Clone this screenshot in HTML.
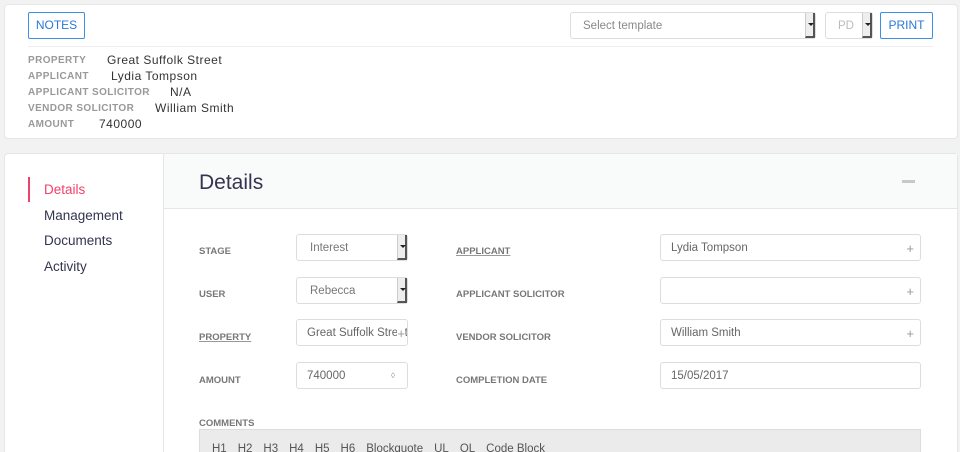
<!DOCTYPE html><html><head><style>
*{box-sizing:border-box;margin:0;padding:0}
html,body{width:960px;height:452px;overflow:hidden}
body{background:#f2f2f2;font-family:"Liberation Sans",sans-serif;position:relative}
.card{position:absolute;background:#fff;border:1px solid #e6e6e6;border-radius:4px}
.btn{position:absolute;border:1px solid #3b8fe8;color:#2a78d8;font-size:12px;text-align:center;line-height:25px;border-radius:2px;background:#fff}
.sel{position:absolute;border:1px solid #ddd;border-radius:3px;background:#fff;font-size:11.5px;color:#888}
.sel .ar{position:absolute;right:0;top:0;bottom:0;width:10px;background:#eee;border-left:1px solid #ccc;border-right:2px solid #555;border-bottom:2px solid #555}
.sel .ar:after{content:"";position:absolute;left:2px;top:10px;border:3px solid transparent;border-top:3px solid #222}
.info{position:absolute;left:28px;font-size:10px;color:#999;letter-spacing:.4px;font-weight:bold}
.info b{font-weight:normal;color:#333;font-size:12px;letter-spacing:.5px;position:absolute;top:-2px;white-space:nowrap}
.nav{position:absolute;left:44px;font-size:13.5px;color:#333550}
.lbl{position:absolute;font-size:9.5px;color:#777;font-weight:bold}
.u{text-decoration:underline;text-decoration-color:#999}
.f{position:absolute;border:1px solid #ddd;border-radius:3px;height:27px;font-size:11.5px;color:#666;padding:7px 10px}
.f .p{position:absolute;right:6px;top:6px;color:#999;font-size:13px}
.tb span{margin-right:11px}
</style></head><body>
<div class="card" style="left:4px;top:4px;width:954px;height:135px"></div>
<div class="btn" style="left:28px;top:12px;width:57px;height:27px">NOTES</div>
<div class="sel" style="left:570px;top:12px;width:246px;height:27px;padding:7px 12px">Select template<div class="ar"></div></div>
<div class="sel" style="left:825px;top:12px;width:48px;height:27px;padding:7px 12px;color:#bbb">PD<div class="ar"></div></div>
<div class="btn" style="left:880px;top:12px;width:53px;height:27px">PRINT</div>
<div style="position:absolute;left:28px;top:46px;width:905px;height:1px;background:#eee"></div>
<div class="info" style="top:55px">PROPERTY<b style="left:79px">Great Suffolk Street</b></div>
<div class="info" style="top:71px">APPLICANT<b style="left:83px">Lydia Tompson</b></div>
<div class="info" style="top:87px">APPLICANT SOLICITOR<b style="left:142px">N/A</b></div>
<div class="info" style="top:103px">VENDOR SOLICITOR<b style="left:127px">William Smith</b></div>
<div class="info" style="top:119px">AMOUNT<b style="left:71px">740000</b></div>

<div class="card" style="left:4px;top:153px;width:954px;height:320px"></div>
<div style="position:absolute;left:163px;top:154px;width:1px;height:300px;background:#e6e6e6"></div>
<div style="position:absolute;left:164px;top:154px;width:793px;height:55px;background:#f9fafa;border-bottom:1px solid #e6e6e6"></div>
<div style="position:absolute;left:199px;top:171px;font-size:21px;color:#333550">Details</div>
<div style="position:absolute;left:902px;top:180px;width:13px;height:3px;background:#c8c8c8"></div>
<div style="position:absolute;left:28px;top:177px;width:2px;height:25px;background:#f0416c"></div>
<div class="nav" style="top:182px;color:#f0416c">Details</div>
<div class="nav" style="top:208px">Management</div>
<div class="nav" style="top:233px">Documents</div>
<div class="nav" style="top:259px">Activity</div>

<div class="lbl" style="left:199px;top:246px">STAGE</div>
<div class="lbl" style="left:199px;top:289px">USER</div>
<div class="lbl u" style="left:199px;top:332px">PROPERTY</div>
<div class="lbl" style="left:199px;top:375px">AMOUNT</div>
<div class="lbl" style="left:199px;top:418px">COMMENTS</div>
<div class="sel" style="left:296px;top:234px;width:112px;height:27px;padding:7px 13px;color:#777">Interest<div class="ar"></div></div>
<div class="sel" style="left:296px;top:277px;width:112px;height:27px;padding:7px 13px;color:#777">Rebecca<div class="ar"></div></div>
<div class="f" style="left:296px;top:319px;width:112px;white-space:nowrap;overflow:hidden">Great Suffolk Street<span class="p" style="right:2px;background:#fff">+</span></div>
<div class="f" style="left:296px;top:362px;width:112px">740000<span class="p" style="right:12px;font-size:8px;top:8px">◊</span></div>

<div class="lbl u" style="left:456px;top:246px">APPLICANT</div>
<div class="lbl" style="left:456px;top:289px">APPLICANT SOLICITOR</div>
<div class="lbl" style="left:456px;top:332px">VENDOR SOLICITOR</div>
<div class="lbl" style="left:456px;top:375px">COMPLETION DATE</div>
<div class="f" style="left:660px;top:234px;width:261px">Lydia Tompson<span class="p">+</span></div>
<div class="f" style="left:660px;top:277px;width:261px"><span class="p">+</span></div>
<div class="f" style="left:660px;top:319px;width:261px">William Smith<span class="p">+</span></div>
<div class="f" style="left:660px;top:362px;width:261px">15/05/2017</div>
<div class="tb" style="position:absolute;left:199px;top:429px;width:722px;height:30px;background:#ebebeb;border:1px solid #ddd;font-size:11.5px;color:#555;padding:13px 12px 0;white-space:nowrap"><span>H1</span><span>H2</span><span>H3</span><span>H4</span><span>H5</span><span>H6</span><span>Blockquote</span><span>UL</span><span>OL</span><span>Code Block</span></div>
</body></html>
